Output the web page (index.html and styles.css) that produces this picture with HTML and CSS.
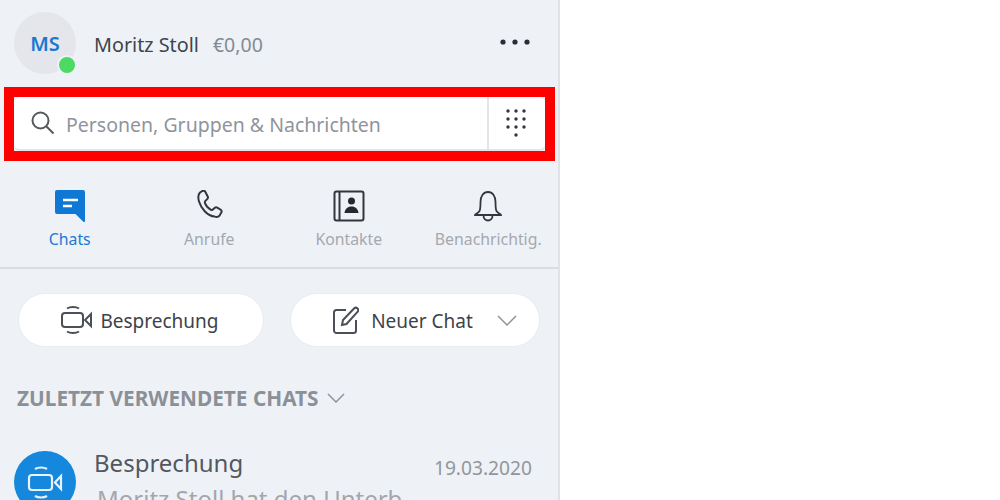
FILE: index.html
```html
<!DOCTYPE html>
<html lang="de">
<head>
<meta charset="utf-8">
<title>Skype</title>
<link rel="stylesheet" href="styles.css">
</head>
<body>
<aside class="sidebar">
  <header class="profile">
    <div class="avatar"><span class="initials">MS</span><span class="status"></span></div>
    <span class="name">Moritz Stoll</span>
    <span class="credit">€0,00</span>
    <svg class="more" width="30" height="6" viewBox="0 0 30 6"><circle cx="3" cy="3" r="2.6"/><circle cx="15" cy="3" r="2.6"/><circle cx="27" cy="3" r="2.6"/></svg>
  </header>

  <div class="highlight">
    <div class="search">
      <svg class="search-icon" width="26" height="26" viewBox="0 0 26 26" fill="none"><circle cx="10.500" cy="10.500" r="8"/><path d="M16.500 16.500l7 7"/></svg>
      <span class="placeholder">Personen, Gruppen &amp; Nachrichten</span>
      <div class="dialpad">
        <svg width="22" height="30" viewBox="0 0 22 30"><circle cx="3" cy="3" r="1.700"/><circle cx="11" cy="3" r="1.700"/><circle cx="19" cy="3" r="1.700"/><circle cx="3" cy="11" r="1.700"/><circle cx="11" cy="11" r="1.700"/><circle cx="19" cy="11" r="1.700"/><circle cx="3" cy="19" r="1.700"/><circle cx="11" cy="19" r="1.700"/><circle cx="19" cy="19" r="1.700"/><circle cx="11" cy="27" r="1.700"/></svg>
      </div>
    </div>
  </div>

  <nav class="tabs">
    <div class="tab active">
      <svg width="32" height="32" viewBox="0 0 32 32"><path fill="#0f78d4" d="M3 0h26a2 2 0 0 1 2 2v29a1 1 0 0 1-1.700.7L21.500 24H3a2 2 0 0 1-2-2V2a2 2 0 0 1 2-2z"/><path d="M9 10h15M9 16h9" stroke="#fff" stroke-width="2.400" fill="none"/></svg>
      <span>Chats</span>
    </div>
    <div class="tab">
      <svg class="line" width="32" height="32" viewBox="0 0 32 32" fill="none"><path d="M7 2.500l2.500-1.500c1.200-.6 2.300-.2 2.900 1l2.300 4.500c.5 1 .3 1.800-.5 2.600l-1.800 1.800c-.7.700-.7 1.500-.3 2.500 1.200 3 3 5 5.600 6.300 1 .4 1.800.3 2.500-.4l1.400-1.300c.8-.7 1.700-.8 2.600-.4l3 1.700c1.500.8 1.800 2.200 1 3.500l-1.500 2.500c-1 1.400-3 1.900-5 1.300C14 26 8 18 6 11.500 5 8 5 4.500 7 2.500z"/></svg>
      <span>Anrufe</span>
    </div>
    <div class="tab">
      <svg class="line" width="32" height="32" viewBox="0 0 32 32" fill="none"><rect x="1.500" y="1.500" width="29" height="29" rx="2"/><path d="M6.500 2v28"/><circle cx="18.500" cy="11" r="3.500" fill="#26282c" stroke="none"/><path d="M11.500 23c.5-4 3-6.500 7-6.500s6.500 2.500 7 6.500z" fill="#26282c" stroke="none"/></svg>
      <span>Kontakte</span>
    </div>
    <div class="tab">
      <svg class="line bell" width="32" height="32" viewBox="0 0 32 32" fill="none"><path d="M3 25c0-1 3-1.500 4.500-4 1-2 1-5 1-9 0-6 3-10 7.500-10s7.500 4 7.500 10c0 4 0 7 1 9 1.500 2.500 4.500 3 4.500 4z"/><path d="M11.500 25.500c0 3 2 5 4.500 5s4.500-2 4.500-5"/></svg>
      <span>Benachrichtig.</span>
    </div>
  </nav>

  <div class="actions">
    <button class="pill meet">
      <svg class="line thin" width="32" height="30" viewBox="0 0 32 30" fill="none"><rect x="1" y="8" width="21" height="14" rx="3"/><path d="M30 9l-6 6 6 6z"/><path d="M6 3.500c3-2 9-2 12 0M6 26.500c3 2 9 2 12 0"/></svg>
      <span class="pill-label">Besprechung</span>
    </button>
    <button class="pill new">
      <svg class="line thin" width="26" height="28" viewBox="0 0 26 28" fill="none"><path d="M13 4H3.500A2.500 2.500 0 0 0 1 6.500v18A2.500 2.500 0 0 0 3.500 27h17a2.500 2.500 0 0 0 2.500-2.500V14"/><path d="M9 19l1-5L21 2.500c1-1 2.500-1 3.500 0s.8 2.500 0 3.400L13.500 18z"/></svg>
      <span class="pill-label new-label">Neuer Chat</span>
      <svg class="chev" width="20" height="11" viewBox="0 0 20 11" fill="none"><path d="M1 1l9 9 9-9"/></svg>
    </button>
  </div>

  <h2 class="section">ZULETZT VERWENDETE CHATS
    <svg class="chev" width="18" height="10" viewBox="0 0 18 10" fill="none"><path d="M1 1l8 8 8-8"/></svg>
  </h2>

  <div class="chat">
    <div class="chat-avatar">
      <svg width="36" height="34" viewBox="0 0 36 34" fill="none"><rect x="2" y="10" width="23" height="15" rx="3"/><path d="M34 11l-6 6.500 6 6.500z"/><path d="M8 4c3-2 9-2 12 0M8 31c3 2 9 2 12 0"/></svg>
    </div>
    <div class="chat-body">
      <div class="chat-top"><span class="chat-title">Besprechung</span><span class="chat-date">19.03.2020</span></div>
      <div class="chat-msg">Moritz Stoll hat den Unterb</div>
    </div>
  </div>
</aside>
</body>
</html>
```

FILE: styles.css
```css
* { box-sizing: border-box; }
html, body { margin: 0; height: 500px; overflow: hidden; background: #fff; }
body { font-family: "Noto Sans", "Open Sans", sans-serif; }

.sidebar {
  width: 560px;
  height: 500px;
  overflow: hidden;
  background: #eef2f7;
  border-right: 2px solid #dfe3e8;
}

.profile { display: flex; align-items: center; height: 87px; padding: 0 28px 2px 14px; }
.avatar {
  position: relative;
  width: 62px; height: 62px;
  border-radius: 50%;
  background: #e5e6ec;
  color: #1b78d0;
  font-size: 20px; font-weight: 600;
  display: flex; align-items: center; justify-content: center;
  flex: none;
}
.initials { padding-top: 2px; }
.status {
  position: absolute; right: -1px; bottom: -1px;
  width: 20px; height: 20px;
  border-radius: 50%;
  background: #4cd964;
  border: 2px solid #eef2f7;
}
.name { margin-left: 18px; padding-top: 4px; font-size: 19.800px; color: #40444c; }
.credit { margin-left: 14px; padding-top: 4px; font-size: 19.500px; color: #848a94; }
.more { margin-left: auto; margin-top: -2px; fill: #2a2d33; }

.highlight { margin: 0 3px 0 4px; border: 10px solid #f00; }
.search { display: flex; align-items: center; height: 54px; background: #fff; border-radius: 6px; border-bottom: 2px solid #e2e5ea; }
.search-icon { margin-left: 16px; stroke: #55595f; stroke-width: 2; }
.placeholder { margin-left: 10px; padding-top: 2px; font-size: 19.500px; color: #8f949c; }
.dialpad { margin-left: auto; width: 58px; height: 100%; padding-right: 3px; border-left: 2px solid #e2e5ea; display: flex; align-items: center; justify-content: center; }
.dialpad svg { fill: #33363c; }

.tabs { display: grid; grid-template-columns: repeat(4, 139.500px); height: 108px; border-bottom: 2px solid #dadee3; padding-top: 29px; }
.tab { display: flex; flex-direction: column; align-items: center; gap: 6px; font-size: 15.800px; color: #a5a8ae; }
.tab.active { color: #1b78d0; }
.line { stroke: #33363c; stroke-width: 2; }
.bell { stroke-width: 1.800; }
.thin { stroke: #4b4f57; }

.actions { display: flex; gap: 26px; padding: 24px 18px 0; }
.pill {
  height: 54px;
  border: 1px solid #e8ebf0;
  border-radius: 27px;
  background: #fff;
  font: inherit; font-size: 19px; color: #3e4249;
  display: flex; align-items: center; justify-content: center;
  padding: 0;
}
.pill-label { padding-top: 2px; }
.meet { width: 246px; gap: 7px; padding-right: 2px; }
.new { width: 250px; gap: 12px; padding-left: 20px; }
.new-label { margin-right: 12px; }
.chev { stroke: #8f949c; stroke-width: 1.500; }

.section { margin: 38px 0 0 17px; display: flex; align-items: center; gap: 8px; font-size: 20.800px; font-weight: 700; color: #8b9097; line-height: 26px; height: 26px; }

.chat { display: flex; margin-top: 40px; padding: 0 26px 0 14px; }
.chat-avatar { width: 62px; height: 62px; border-radius: 50%; background: #1587dc; flex: none; display: flex; align-items: center; justify-content: center; }
.chat-avatar svg { stroke: #e9f3fb; stroke-width: 2.200; }
.chat-body { margin-left: 18px; flex: 1; }
.chat-top { display: flex; justify-content: space-between; align-items: flex-start; margin-top: -5px; height: 35px; }
.chat-title { font-size: 24px; color: #54575d; }
.chat-date { font-size: 19.200px; padding-top: 8px; color: #92969c; }
.chat-msg { font-size: 24px; line-height: 36px; margin-left: 3px; color: #a2a6ad; white-space: nowrap; }
```
